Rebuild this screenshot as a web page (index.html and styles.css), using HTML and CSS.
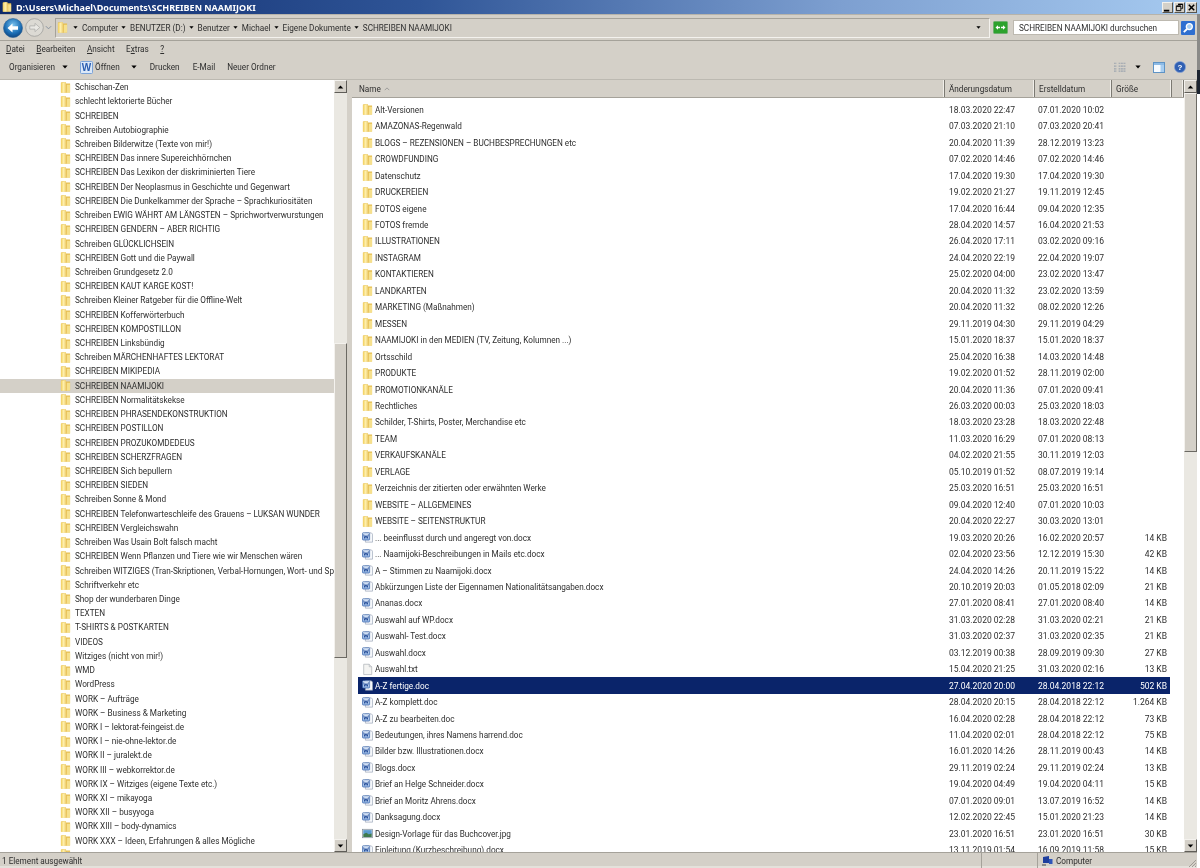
FILE: index.html
```html
<!DOCTYPE html>
<html lang="de">
<head>
<meta charset="utf-8">
<title>SCHREIBEN NAAMIJOKI</title>
<link rel="stylesheet" href="styles.css">
</head>
<body>
<svg class="defs" width="0" height="0" aria-hidden="true">
  <defs>
    <linearGradient id="fg" x1="0" y1="0" x2="1" y2="0">
      <stop offset="0" stop-color="#f0cd5a"/><stop offset=".45" stop-color="#fff0ad"/><stop offset="1" stop-color="#e6bf55"/>
    </linearGradient>
    <linearGradient id="wg" x1="0" y1="0" x2="0" y2="1">
      <stop offset="0" stop-color="#e6effa"/><stop offset="1" stop-color="#8fb2e2"/>
    </linearGradient>
    <symbol id="folder" viewBox="0 0 12 14">
      <path d="M1 1.5 L5 1 L5.5 2.5 L11 2.5 L11 12.5 L1 12.5Z" fill="#e5bd50"/>
      <path d="M1 2 L6.5 1 L7.5 12.8 L1 12.8Z" fill="url(#fg)"/>
      <path d="M7.5 4 L11 4 L11 12.5 L7.5 12.8Z" fill="#f6e08c"/>
    </symbol>
    <symbol id="word" viewBox="0 0 13 14">
      <path d="M4 1.5 H11 L12.5 3 V12.5 H4Z" fill="#f6f8fb" stroke="#8a97ab" stroke-width=".7"/>
      <rect x=".6" y="1.4" width="8.4" height="8.6" rx=".8" fill="url(#wg)" stroke="#2f5ea8" stroke-width=".8"/>
      <path d="M2 3.4 L3.2 8 L4.7 4.8 L6.2 8 L7.6 3.4" fill="none" stroke="#17408f" stroke-width="1"/>
    </symbol>
    <symbol id="txt" viewBox="0 0 13 14">
      <path d="M2 .8 H8.5 L11.5 3.8 V13 H2Z" fill="#f4f4f2" stroke="#a9aeb4" stroke-width=".8"/>
      <path d="M8.5 .8 V3.8 H11.5" fill="#dfe1e3" stroke="#a9aeb4" stroke-width=".6"/>
    </symbol>
    <symbol id="image" viewBox="0 0 13 14">
      <rect x=".5" y="2" width="12" height="10" fill="#eef1f4" stroke="#7b8794" stroke-width=".8"/>
      <rect x="1.5" y="3" width="10" height="5" fill="#5b9bd0"/>
      <path d="M1.5 8 L5 6 L8 8 L11.5 7 V11 H1.5Z" fill="#3f7a4e"/>
    </symbol>
    <symbol id="up" viewBox="0 0 8 5"><path d="M4 .5 L7.5 4.5 H.5Z" fill="#000"/></symbol>
    <symbol id="down" viewBox="0 0 8 5"><path d="M.5 .5 H7.5 L4 4.5Z" fill="#000"/></symbol>
  </defs>
</svg>

<div class="window">
  <header class="titlebar">
    <svg class="title-icon"><use href="#folder"/></svg>
    <span class="title-text">D:\Users\Michael\Documents\SCHREIBEN NAAMIJOKI</span>
    <div class="winbtns">
      <span class="winbtn"><svg viewBox="0 0 10 10"><rect x="1" y="7.5" width="6" height="2" fill="#000"/></svg></span>
      <span class="winbtn"><svg viewBox="0 0 10 10"><path d="M3.5 1.5H8.5V6H7M1.5 3.5H6.5V8.5H1.5Z" fill="none" stroke="#000" stroke-width="1"/><path d="M3.5 1.5H8.5M1.5 3.5H6.5" stroke="#000" stroke-width="1.4"/></svg></span>
      <span class="winbtn"><svg viewBox="0 0 10 10"><path d="M2 2L8 8M8 2L2 8" stroke="#000" stroke-width="1.7"/></svg></span>
    </div>
  </header>

  <div class="addressrow">
    <svg class="back" viewBox="0 0 20 20"><defs><radialGradient id="bk" cx=".5" cy=".35" r=".7"><stop offset="0" stop-color="#7dc4ee"/><stop offset=".6" stop-color="#1c6fb6"/><stop offset="1" stop-color="#0c3e78"/></radialGradient></defs><circle cx="10" cy="10" r="9.5" fill="url(#bk)" stroke="#2a5f92" stroke-width=".6"/><path d="M4.5 10 L9.5 5.6 V8.3 H15 V11.7 H9.5 V14.4Z" fill="#fff"/></svg>
    <svg class="forward" viewBox="0 0 20 20"><circle cx="10" cy="10" r="9.3" fill="#dcdad4" stroke="#9d9d9b" stroke-width=".8"/><path d="M15.5 10 L10.5 5.6 V8.3 H5 V11.7 H10.5 V14.4Z" fill="#e9e8e4" stroke="#a6a6a3" stroke-width=".7"/></svg>
    <svg class="hist" viewBox="0 0 8 5"><path d="M1 1 L4 4 L7 1" fill="none" stroke="#7e8c9b" stroke-width="1"/></svg>
    <div class="crumbs">
      <svg class="crumb-folder"><use href="#folder"/></svg>
      <svg class="tri"><use href="#down"/></svg><span class="crumb">Computer</span>
      <svg class="tri"><use href="#down"/></svg><span class="crumb">BENUTZER (D:)</span>
      <svg class="tri"><use href="#down"/></svg><span class="crumb">Benutzer</span>
      <svg class="tri"><use href="#down"/></svg><span class="crumb">Michael</span>
      <svg class="tri"><use href="#down"/></svg><span class="crumb">Eigene Dokumente</span>
      <svg class="tri"><use href="#down"/></svg><span class="crumb">SCHREIBEN NAAMIJOKI</span>
      <svg class="tri tri-end"><use href="#down"/></svg>
    </div>
    <svg class="refresh" viewBox="0 0 15 13"><rect x=".5" y=".5" width="14" height="12" rx="1" fill="#2da22d" stroke="#6fae6f"/><path d="M2.5 6.5 L5 4.3 V5.8 H7 V7.2 H5 V8.7Z M12.5 6.5 L10 4.3 V5.8 H8 V7.2 H10 V8.7Z" fill="#fff"/></svg>
    <div class="search">SCHREIBEN NAAMIJOKI durchsuchen</div>
    <svg class="searchbtn" viewBox="0 0 14 14"><rect width="14" height="14" rx="1" fill="#2f6fd0"/><circle cx="8.3" cy="5.6" r="3" fill="#a9d0f5" stroke="#fff" stroke-width="1.3"/><path d="M6 8 L2.8 11.2" stroke="#fff" stroke-width="1.8"/></svg>
  </div>

  <nav class="menubar">
    <span><u>D</u>atei</span><span><u>B</u>earbeiten</span><span><u>A</u>nsicht</span><span>E<u>x</u>tras</span><span><u>?</u></span>
  </nav>

  <div class="toolbar">
    <span class="tool">Organisieren</span>
    <svg class="tool-tri"><use href="#down"/></svg>
    <svg class="word-big" viewBox="0 0 13 13"><rect x=".5" y=".5" width="12" height="12" rx="1" fill="#dbe8f8" stroke="#7ba3d8"/><text x="6.5" y="10" text-anchor="middle" class="word-letter">W</text></svg>
    <span class="tool open">Öffnen</span>
    <svg class="tool-tri tri-open"><use href="#down"/></svg>
    <span class="tool print">Drucken</span>
    <span class="tool mail">E-Mail</span>
    <span class="tool newdir">Neuer Ordner</span>
    <div class="tool-right">
      <svg class="viewicon" viewBox="0 0 13 10"><path d="M0 1h3M0 4h3M0 7h3M0 9.5h3M5 1h8M5 4h8M5 7h8M5 9.5h8" stroke="#9aa3ad" stroke-width="1.2" stroke-dasharray="2 .6"/></svg>
      <svg class="tool-tri tri-view"><use href="#down"/></svg>
      <svg class="paneicon" viewBox="0 0 12 11"><rect x=".5" y=".5" width="11" height="10" fill="#f7fbff" stroke="#5e93c5"/><rect x="1" y="1" width="10" height="2" fill="#8dbbe6"/><rect x="7.5" y="3" width="3.5" height="7" fill="#a7cdf0"/></svg>
      <svg class="help" viewBox="0 0 12 12"><circle cx="6" cy="6" r="5.6" fill="#2f5fb3" stroke="#8aa5d6" stroke-width=".7"/><text x="6" y="9" text-anchor="middle" class="help-q">?</text></svg>
    </div>
  </div>

  <main class="panes">
    <aside class="tree">
      <ul class="tree-list">
        <li><svg><use href="#folder"/></svg>Schischan-Zen</li>
        <li><svg><use href="#folder"/></svg>schlecht lektorierte Bücher</li>
        <li><svg><use href="#folder"/></svg>SCHREIBEN</li>
        <li><svg><use href="#folder"/></svg>Schreiben Autobiographie</li>
        <li><svg><use href="#folder"/></svg>Schreiben Bilderwitze (Texte von mir!)</li>
        <li><svg><use href="#folder"/></svg>SCHREIBEN Das innere Supereichhörnchen</li>
        <li><svg><use href="#folder"/></svg>SCHREIBEN Das Lexikon der diskriminierten Tiere</li>
        <li><svg><use href="#folder"/></svg>SCHREIBEN Der Neoplasmus in Geschichte und Gegenwart</li>
        <li><svg><use href="#folder"/></svg>SCHREIBEN Die Dunkelkammer der Sprache – Sprachkuriositäten</li>
        <li><svg><use href="#folder"/></svg>Schreiben EWIG WÄHRT AM LÄNGSTEN – Sprichwortverwurstungen</li>
        <li><svg><use href="#folder"/></svg>SCHREIBEN GENDERN – ABER RICHTIG</li>
        <li><svg><use href="#folder"/></svg>Schreiben GLÜCKLICHSEIN</li>
        <li><svg><use href="#folder"/></svg>SCHREIBEN Gott und die Paywall</li>
        <li><svg><use href="#folder"/></svg>Schreiben Grundgesetz 2.0</li>
        <li><svg><use href="#folder"/></svg>SCHREIBEN KAUT KARGE KOST!</li>
        <li><svg><use href="#folder"/></svg>Schreiben Kleiner Ratgeber für die Offline-Welt</li>
        <li><svg><use href="#folder"/></svg>SCHREIBEN Kofferwörterbuch</li>
        <li><svg><use href="#folder"/></svg>SCHREIBEN KOMPOSTILLON</li>
        <li><svg><use href="#folder"/></svg>SCHREIBEN Linksbündig</li>
        <li><svg><use href="#folder"/></svg>Schreiben MÄRCHENHAFTES LEKTORAT</li>
        <li><svg><use href="#folder"/></svg>SCHREIBEN MIKIPEDIA</li>
        <li class="current"><svg><use href="#folder"/></svg>SCHREIBEN NAAMIJOKI</li>
        <li><svg><use href="#folder"/></svg>SCHREIBEN Normalitätskekse</li>
        <li><svg><use href="#folder"/></svg>SCHREIBEN PHRASENDEKONSTRUKTION</li>
        <li><svg><use href="#folder"/></svg>SCHREIBEN POSTILLON</li>
        <li><svg><use href="#folder"/></svg>SCHREIBEN PROZUKOMDEDEUS</li>
        <li><svg><use href="#folder"/></svg>SCHREIBEN SCHERZFRAGEN</li>
        <li><svg><use href="#folder"/></svg>SCHREIBEN Sich bepullern</li>
        <li><svg><use href="#folder"/></svg>SCHREIBEN SIEDEN</li>
        <li><svg><use href="#folder"/></svg>Schreiben Sonne &amp; Mond</li>
        <li><svg><use href="#folder"/></svg>SCHREIBEN Telefonwarteschleife des Grauens – LUKSAN WUNDER</li>
        <li><svg><use href="#folder"/></svg>SCHREIBEN Vergleichswahn</li>
        <li><svg><use href="#folder"/></svg>Schreiben Was Usain Bolt falsch macht</li>
        <li><svg><use href="#folder"/></svg>SCHREIBEN Wenn Pflanzen und Tiere wie wir Menschen wären</li>
        <li><svg><use href="#folder"/></svg>Schreiben WITZIGES (Tran-Skriptionen, Verbal-Hornungen, Wort- und Sprachspiele)</li>
        <li><svg><use href="#folder"/></svg>Schriftverkehr etc</li>
        <li><svg><use href="#folder"/></svg>Shop der wunderbaren Dinge</li>
        <li><svg><use href="#folder"/></svg>TEXTEN</li>
        <li><svg><use href="#folder"/></svg>T-SHIRTS &amp; POSTKARTEN</li>
        <li><svg><use href="#folder"/></svg>VIDEOS</li>
        <li><svg><use href="#folder"/></svg>Witziges (nicht von mir!)</li>
        <li><svg><use href="#folder"/></svg>WMD</li>
        <li><svg><use href="#folder"/></svg>WordPress</li>
        <li><svg><use href="#folder"/></svg>WORK – Aufträge</li>
        <li><svg><use href="#folder"/></svg>WORK – Business &amp; Marketing</li>
        <li><svg><use href="#folder"/></svg>WORK I – lektorat-feingeist.de</li>
        <li><svg><use href="#folder"/></svg>WORK I – nie-ohne-lektor.de</li>
        <li><svg><use href="#folder"/></svg>WORK II – juralekt.de</li>
        <li><svg><use href="#folder"/></svg>WORK III – webkorrektor.de</li>
        <li><svg><use href="#folder"/></svg>WORK IX – Witziges (eigene Texte etc.)</li>
        <li><svg><use href="#folder"/></svg>WORK XI – mikayoga</li>
        <li><svg><use href="#folder"/></svg>WORK XII – busyyoga</li>
        <li><svg><use href="#folder"/></svg>WORK XIII – body-dynamics</li>
        <li><svg><use href="#folder"/></svg>WORK XXX – Ideen, Erfahrungen &amp; alles Mögliche</li>
        <li><svg><use href="#folder"/></svg></li>
      </ul>
    </aside>
    <div class="scrollbar tree-scroll">
      <span class="sb-btn"><svg><use href="#up"/></svg></span>
      <span class="sb-track sb-t1"></span>
      <span class="sb-thumb sb-th1"></span>
      <span class="sb-track sb-t2"></span>
      <span class="sb-btn"><svg><use href="#down"/></svg></span>
    </div>
    <div class="splitter"></div>
    <section class="files">
      <div class="colhead">
        <span class="col-name">Name <svg class="sort" viewBox="0 0 8 5"><path d="M1 4 L4 1 L7 4" fill="none" stroke="#8b8b8b"/></svg></span>
        <span>Änderungsdatum</span>
        <span>Erstelldatum</span>
        <span>Größe</span>
        <span></span>
      </div>
      <div class="filelist">
        <div class="row"><span class="n"><svg><use href="#folder"/></svg>Alt-Versionen</span><span>18.03.2020 22:47</span><span>07.01.2020 10:02</span><span class="s"></span></div>
        <div class="row"><span class="n"><svg><use href="#folder"/></svg>AMAZONAS-Regenwald</span><span>07.03.2020 21:10</span><span>07.03.2020 20:41</span><span class="s"></span></div>
        <div class="row"><span class="n"><svg><use href="#folder"/></svg>BLOGS – REZENSIONEN – BUCHBESPRECHUNGEN etc</span><span>20.04.2020 11:39</span><span>28.12.2019 13:23</span><span class="s"></span></div>
        <div class="row"><span class="n"><svg><use href="#folder"/></svg>CROWDFUNDING</span><span>07.02.2020 14:46</span><span>07.02.2020 14:46</span><span class="s"></span></div>
        <div class="row"><span class="n"><svg><use href="#folder"/></svg>Datenschutz</span><span>17.04.2020 19:30</span><span>17.04.2020 19:30</span><span class="s"></span></div>
        <div class="row"><span class="n"><svg><use href="#folder"/></svg>DRUCKEREIEN</span><span>19.02.2020 21:27</span><span>19.11.2019 12:45</span><span class="s"></span></div>
        <div class="row"><span class="n"><svg><use href="#folder"/></svg>FOTOS eigene</span><span>17.04.2020 16:44</span><span>09.04.2020 12:35</span><span class="s"></span></div>
        <div class="row"><span class="n"><svg><use href="#folder"/></svg>FOTOS fremde</span><span>28.04.2020 14:57</span><span>16.04.2020 21:53</span><span class="s"></span></div>
        <div class="row"><span class="n"><svg><use href="#folder"/></svg>ILLUSTRATIONEN</span><span>26.04.2020 17:11</span><span>03.02.2020 09:16</span><span class="s"></span></div>
        <div class="row"><span class="n"><svg><use href="#folder"/></svg>INSTAGRAM</span><span>24.04.2020 22:19</span><span>22.04.2020 19:07</span><span class="s"></span></div>
        <div class="row"><span class="n"><svg><use href="#folder"/></svg>KONTAKTIEREN</span><span>25.02.2020 04:00</span><span>23.02.2020 13:47</span><span class="s"></span></div>
        <div class="row"><span class="n"><svg><use href="#folder"/></svg>LANDKARTEN</span><span>20.04.2020 11:32</span><span>23.02.2020 13:59</span><span class="s"></span></div>
        <div class="row"><span class="n"><svg><use href="#folder"/></svg>MARKETING (Maßnahmen)</span><span>20.04.2020 11:32</span><span>08.02.2020 12:26</span><span class="s"></span></div>
        <div class="row"><span class="n"><svg><use href="#folder"/></svg>MESSEN</span><span>29.11.2019 04:30</span><span>29.11.2019 04:29</span><span class="s"></span></div>
        <div class="row"><span class="n"><svg><use href="#folder"/></svg>NAAMIJOKI in den MEDIEN (TV, Zeitung, Kolumnen ...)</span><span>15.01.2020 18:37</span><span>15.01.2020 18:37</span><span class="s"></span></div>
        <div class="row"><span class="n"><svg><use href="#folder"/></svg>Ortsschild</span><span>25.04.2020 16:38</span><span>14.03.2020 14:48</span><span class="s"></span></div>
        <div class="row"><span class="n"><svg><use href="#folder"/></svg>PRODUKTE</span><span>19.02.2020 01:52</span><span>28.11.2019 02:00</span><span class="s"></span></div>
        <div class="row"><span class="n"><svg><use href="#folder"/></svg>PROMOTIONKANÄLE</span><span>20.04.2020 11:36</span><span>07.01.2020 09:41</span><span class="s"></span></div>
        <div class="row"><span class="n"><svg><use href="#folder"/></svg>Rechtliches</span><span>26.03.2020 00:03</span><span>25.03.2020 18:03</span><span class="s"></span></div>
        <div class="row"><span class="n"><svg><use href="#folder"/></svg>Schilder, T-Shirts, Poster, Merchandise etc</span><span>18.03.2020 23:28</span><span>18.03.2020 22:48</span><span class="s"></span></div>
        <div class="row"><span class="n"><svg><use href="#folder"/></svg>TEAM</span><span>11.03.2020 16:29</span><span>07.01.2020 08:13</span><span class="s"></span></div>
        <div class="row"><span class="n"><svg><use href="#folder"/></svg>VERKAUFSKANÄLE</span><span>04.02.2020 21:55</span><span>30.11.2019 12:03</span><span class="s"></span></div>
        <div class="row"><span class="n"><svg><use href="#folder"/></svg>VERLAGE</span><span>05.10.2019 01:52</span><span>08.07.2019 19:14</span><span class="s"></span></div>
        <div class="row"><span class="n"><svg><use href="#folder"/></svg>Verzeichnis der zitierten oder erwähnten Werke</span><span>25.03.2020 16:51</span><span>25.03.2020 16:51</span><span class="s"></span></div>
        <div class="row"><span class="n"><svg><use href="#folder"/></svg>WEBSITE – ALLGEMEINES</span><span>09.04.2020 12:40</span><span>07.01.2020 10:03</span><span class="s"></span></div>
        <div class="row"><span class="n"><svg><use href="#folder"/></svg>WEBSITE – SEITENSTRUKTUR</span><span>20.04.2020 22:27</span><span>30.03.2020 13:01</span><span class="s"></span></div>
        <div class="row"><span class="n"><svg><use href="#word"/></svg>... beeinflusst durch und angeregt von.docx</span><span>19.03.2020 20:26</span><span>16.02.2020 20:57</span><span class="s">14 KB</span></div>
        <div class="row"><span class="n"><svg><use href="#word"/></svg>... Naamijoki-Beschreibungen in Mails etc.docx</span><span>02.04.2020 23:56</span><span>12.12.2019 15:30</span><span class="s">42 KB</span></div>
        <div class="row"><span class="n"><svg><use href="#word"/></svg>A – Stimmen zu Naamijoki.docx</span><span>24.04.2020 14:26</span><span>20.11.2019 15:22</span><span class="s">14 KB</span></div>
        <div class="row"><span class="n"><svg><use href="#word"/></svg>Abkürzungen Liste der Eigennamen Nationalitätsangaben.docx</span><span>20.10.2019 20:03</span><span>01.05.2018 02:09</span><span class="s">21 KB</span></div>
        <div class="row"><span class="n"><svg><use href="#word"/></svg>Ananas.docx</span><span>27.01.2020 08:41</span><span>27.01.2020 08:40</span><span class="s">14 KB</span></div>
        <div class="row"><span class="n"><svg><use href="#word"/></svg>Auswahl auf WP.docx</span><span>31.03.2020 02:28</span><span>31.03.2020 02:21</span><span class="s">21 KB</span></div>
        <div class="row"><span class="n"><svg><use href="#word"/></svg>Auswahl- Test.docx</span><span>31.03.2020 02:37</span><span>31.03.2020 02:35</span><span class="s">21 KB</span></div>
        <div class="row"><span class="n"><svg><use href="#word"/></svg>Auswahl.docx</span><span>03.12.2019 00:38</span><span>28.09.2019 09:30</span><span class="s">27 KB</span></div>
        <div class="row"><span class="n"><svg><use href="#txt"/></svg>Auswahl.txt</span><span>15.04.2020 21:25</span><span>31.03.2020 02:16</span><span class="s">13 KB</span></div>
        <div class="row selected"><span class="n"><svg><use href="#word"/></svg>A-Z fertige.doc</span><span>27.04.2020 20:00</span><span>28.04.2018 22:12</span><span class="s">502 KB</span></div>
        <div class="row"><span class="n"><svg><use href="#word"/></svg>A-Z komplett.doc</span><span>28.04.2020 20:15</span><span>28.04.2018 22:12</span><span class="s">1.264 KB</span></div>
        <div class="row"><span class="n"><svg><use href="#word"/></svg>A-Z zu bearbeiten.doc</span><span>16.04.2020 02:28</span><span>28.04.2018 22:12</span><span class="s">73 KB</span></div>
        <div class="row"><span class="n"><svg><use href="#word"/></svg>Bedeutungen, ihres Namens harrend.doc</span><span>11.04.2020 02:01</span><span>28.04.2018 22:12</span><span class="s">75 KB</span></div>
        <div class="row"><span class="n"><svg><use href="#word"/></svg>Bilder bzw. Illustrationen.docx</span><span>16.01.2020 14:26</span><span>28.11.2019 00:43</span><span class="s">14 KB</span></div>
        <div class="row"><span class="n"><svg><use href="#word"/></svg>Blogs.docx</span><span>29.11.2019 02:24</span><span>29.11.2019 02:24</span><span class="s">13 KB</span></div>
        <div class="row"><span class="n"><svg><use href="#word"/></svg>Brief an Helge Schneider.docx</span><span>19.04.2020 04:49</span><span>19.04.2020 04:11</span><span class="s">15 KB</span></div>
        <div class="row"><span class="n"><svg><use href="#word"/></svg>Brief an Moritz Ahrens.docx</span><span>07.01.2020 09:01</span><span>13.07.2019 16:52</span><span class="s">14 KB</span></div>
        <div class="row"><span class="n"><svg><use href="#word"/></svg>Danksagung.docx</span><span>12.02.2020 22:45</span><span>15.01.2020 21:23</span><span class="s">14 KB</span></div>
        <div class="row"><span class="n"><svg><use href="#image"/></svg>Design-Vorlage für das Buchcover.jpg</span><span>23.01.2020 16:51</span><span>23.01.2020 16:51</span><span class="s">30 KB</span></div>
        <div class="row"><span class="n"><svg><use href="#word"/></svg>Einleitung (Kurzbeschreibung).docx</span><span>13.11.2019 01:54</span><span>16.09.2019 11:58</span><span class="s">15 KB</span></div>
      </div>
    </section>
    <div class="scrollbar file-scroll">
      <span class="sb-btn"><svg><use href="#up"/></svg></span>
      <span class="sb-thumb sb-th2"></span>
      <span class="sb-track sb-t3"></span>
      <span class="sb-btn"><svg><use href="#down"/></svg></span>
    </div>
  </main>

  <footer class="statusbar">
    <span class="st-main">1 Element ausgewählt</span>
    <span class="st-mid"></span>
    <span class="st-comp">
      <svg viewBox="0 0 11 10"><path d="M1 1 L7 0 V7 H1Z" fill="#1f3f9e"/><path d="M7 3 H10.5 V8 H7Z" fill="#2f56b8"/><rect x="0" y="8" width="4" height="2" fill="#8b8b8b"/></svg>
      Computer
    </span>
    <svg class="grip" viewBox="0 0 10 10"><path d="M9 2 L2 9 M9 5 L5 9 M9 8 L8 9" stroke="#a09d96" stroke-width="1"/></svg>
  </footer>
</div>
</body>
</html>
```

FILE: styles.css
```css
* { box-sizing: border-box; }
html, body { margin: 0; padding: 0; }
body {
  width: 1200px; height: 868px; overflow: hidden;
  background: linear-gradient(180deg, #a6caf0 0 14px, #8a8a88 14px 70px, #1c2430 70px 94px, #fff 94px);
}
ul { list-style: none; margin: 0; padding: 0; }
.defs { position: absolute; }

.window {
  width: 1197px; height: 868px; display: flex; flex-direction: column;
  font-family: Roboto, sans-serif; font-size: 8.2px; color: #2e2e2e;
  background: #d4d0c8; overflow: hidden; filter: blur(.25px);
}

.titlebar {
  height: 14px; flex: none; display: flex; align-items: center; padding-left: 2px;
  background: linear-gradient(90deg, #0e2a6b 0%, #2f5597 35%, #7d9fd0 70%, #a6caf0 100%);
}
.title-icon { width: 10px; height: 12px; margin-right: 4px; }
.title-text { color: #fff; font-family: "Noto Sans", sans-serif; font-weight: 700; font-size: 9px; }
.winbtns { margin-left: auto; display: flex; gap: 1px; }
.winbtn {
  width: 11px; height: 11px; display: flex; background: #d4d0c8;
  border: 1px solid; border-color: #f4f2ee #57554f #57554f #f4f2ee;
}
.winbtn svg { width: 100%; height: 100%; }

.addressrow {
  height: 27px; flex: none; display: flex; align-items: center; padding: 1px 2px 0 3px;
  border-bottom: 1px solid #a5a29a;
  box-shadow: inset 0 1px 0 #b6b3ab;
}
.back { width: 20px; height: 20px; flex: none; }
.forward { width: 19px; height: 19px; margin-left: 2px; flex: none; }
.hist { width: 7px; height: 5px; margin-left: 1px; flex: none; }
.crumbs {
  flex: 1; height: 20px; margin-left: 3px; display: flex; align-items: center;
  border: 1px solid #efece6; border-color: #a5a29a #f4f2ee #f4f2ee #a5a29a;
}
.crumb-folder { width: 11px; height: 13px; margin: 0 5px 0 1px; flex: none; }
.crumbs .tri { width: 5px; height: 3px; flex: none; margin-right: 4px; }
.crumb { margin-right: 3px; white-space: nowrap; }
.crumbs .tri-end { margin-left: auto; margin-right: 8px; }
.refresh { width: 15px; height: 13px; margin: 0 5px 0 3px; flex: none; }
.search {
  width: 166px; height: 15px; flex: none; background: #fff; padding-left: 5px; line-height: 14px;
  border: 1px solid #bdb9b0;
}
.searchbtn { width: 14px; height: 14px; margin-left: 2px; flex: none; }

.menubar { height: 18px; flex: none; display: flex; align-items: center; gap: 11.5px; padding: 0 0 2px 6px; }
.toolbar { height: 20px; flex: none; display: flex; align-items: center; padding: 0 0 4px 9px; }
.tool-tri { width: 6px; height: 4px; flex: none; margin-left: 7px; }
.word-big { width: 13px; height: 13px; margin-left: 12px; flex: none; }
.word-letter { font: 700 10px "Liberation Sans", sans-serif; fill: #2a5db0; }
.open { margin-left: 2px; }
.toolbar .tri-open { margin-left: 11px; }
.print { margin-left: 13px; }
.mail { margin-left: 13px; }
.newdir { margin-left: 12px; }
.tool-right { margin-left: auto; display: flex; align-items: center; padding-right: 11px; }
.viewicon { width: 12px; height: 10px; }
.toolbar .tri-view { margin-left: 9px; }
.paneicon { width: 12px; height: 11px; margin-left: 12px; }
.help { width: 12px; height: 12px; margin-left: 9px; }
.help-q { font: 700 8px "Liberation Sans", sans-serif; fill: #fff; }

.panes { flex: 1; min-height: 0; display: flex; border-top: 1px solid #bcb9b1; }
.tree { width: 334px; flex: none; background: #fff; overflow: hidden; }
.tree-list li {
  height: 14.22px; display: flex; align-items: center; padding-left: 60px; white-space: nowrap; overflow: hidden;
}
.tree-list svg, .n svg { flex: none; width: 11px; height: 13px; }
.tree-list svg { margin-right: 4px; }
.tree-list .current { background: #d4d0c8; }

.scrollbar { width: 13px; flex: none; display: flex; flex-direction: column; }
.sb-btn {
  height: 13px; flex: none; display: flex; align-items: center; justify-content: center; background: #d4d0c8;
  border: 1px solid; border-color: #f4f2ee #5f5d58 #5f5d58 #f4f2ee;
}
.sb-btn svg { width: 7px; height: 4px; }
.sb-thumb {
  flex: none; background: #d4d0c8;
  border: 1px solid; border-color: #f4f2ee #6b6963 #6b6963 #f4f2ee;
}
.sb-track { background: #eae8e2; flex: none; }
.sb-t1 { height: 250px; }
.sb-th1 { height: 315px; }
.scrollbar .sb-t2 { flex: 1; }
.sb-th2 { height: 359px; }
.scrollbar .sb-t3 { flex: 1; }
.splitter { width: 5px; flex: none; background: #d4d0c8; }

.files { flex: 1; min-width: 0; background: #fff; display: flex; flex-direction: column; overflow: hidden; }
.colhead {
  height: 18px; flex: none; display: grid; grid-template-columns: 593px 90px 77px 60px 1fr; background: #d4d0c8;
  border-bottom: 1px solid #a5a29a;
}
.colhead span { display: flex; align-items: center; padding-left: 4px; border-right: 1px solid #7b7972; box-shadow: inset -1px 0 0 #f1efea; }
.colhead .col-name { padding-left: 7px; }
.sort { width: 6px; height: 4px; margin-left: 3px; }
.filelist { flex: 1; overflow: hidden; padding: 3.6px 14px 0 6px; }
.row {
  height: 16.457px; display: grid; grid-template-columns: 591px 89px 78px 54px; align-items: center; white-space: nowrap;
  font-size: 8.5px;
}
.n { display: flex; align-items: center; gap: 2px; padding-left: 4px; overflow: hidden; font-size: 8.2px; }
.s { text-align: right; padding-right: 3px; }
.selected { background: #0a246a; color: #fff; }

.statusbar {
  height: 16px; flex: none; display: flex; align-items: center; border-top: 1px solid #a5a29a; background: #d4d0c8;
  box-shadow: inset 0 -2px 0 #e4e1db;
}
.st-main { width: 981px; padding-left: 2px; flex: none; }
.st-mid { width: 57px; flex: none; height: 100%; border-left: 1px solid #a5a29a; border-right: 1px solid #a5a29a; }
.st-comp { display: flex; align-items: center; gap: 3px; padding-left: 4px; flex: 1; }
.st-comp svg { width: 11px; height: 10px; }
.grip { width: 10px; height: 10px; align-self: flex-end; flex: none; }
```
